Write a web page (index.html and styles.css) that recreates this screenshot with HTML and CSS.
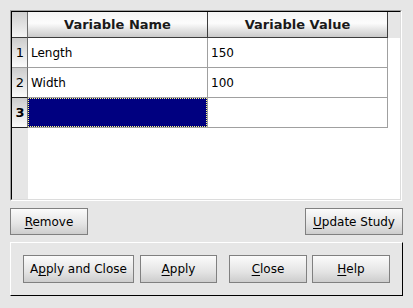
FILE: index.html
```html
<!DOCTYPE html>
<html lang="en">
<head>
  <meta charset="UTF-8">
  <title>Study Variables</title>
  <link rel="stylesheet" href="styles.css">
</head>
<body>
  <div class="dialog">
    <div class="frame">
      <div class="frame-inner">
        <div class="grid">
          <div class="corner"></div>
          <div class="col-head">Variable Name</div>
          <div class="col-head">Variable Value</div>
          <div class="col-rest"></div>

          <div class="row-head">1</div>
          <div class="cell">Length</div>
          <div class="cell">150</div>
          <div class="cell-rest"></div>

          <div class="row-head">2</div>
          <div class="cell">Width</div>
          <div class="cell">100</div>
          <div class="cell-rest"></div>

          <div class="row-head current">3</div>
          <div class="cell selected"><span class="focus"></span></div>
          <div class="cell"></div>
          <div class="cell-rest"></div>
        </div>
        <div class="filler">
          <div class="filler-head"></div>
          <div class="filler-body"></div>
        </div>
      </div>
    </div>

    <div class="action-row">
      <button class="btn btn-remove"><u>R</u>emove</button>
      <button class="btn btn-update"><u>U</u>pdate Study</button>
    </div>

    <div class="group">
      <button class="btn btn-apply-close">A<u>p</u>ply and Close</button>
      <button class="btn btn-apply"><u>A</u>pply</button>
      <button class="btn btn-close"><u>C</u>lose</button>
      <button class="btn btn-help"><u>H</u>elp</button>
    </div>
  </div>
</body>
</html>
```

FILE: styles.css
```css
/* Global */
body {
  margin: 0;
  background-color: #e6e6e6;
  font-family: 'DejaVu Sans', sans-serif;
  font-size: 12px;
  color: #000;
}

.dialog {
  width: 413px;
  height: 308px;
  padding: 10px 0 0 10px;
  box-sizing: border-box;
}

/* Table frame (sunken) */
.frame {
  width: 392px;
  height: 191px;
  box-sizing: border-box;
  border: 1px solid;
  border-color: #a0a0a0 #ffffff #ffffff #a0a0a0;
}

.frame-inner {
  height: 100%;
  box-sizing: border-box;
  border: 1px solid;
  border-color: #000000 #dcdcdc #dcdcdc #000000;
  display: flex;
  flex-direction: column;
  background: #ffffff;
}

.grid {
  display: grid;
  grid-template-columns: 16px 180px 180px 1fr;
  grid-template-rows: 26px 30px 30px 30px;
}

/* Headers */
.corner,
.col-head,
.col-rest {
  box-sizing: border-box;
  border-bottom: 1px solid #3c3c3c;
}

.corner {
  border-right: 1px solid #6e6e6e;
  background: linear-gradient(#cfcfcf, #f4f4f4);
}

.col-head {
  border-right: 1px solid #3c3c3c;
  background: linear-gradient(#f4f4f4, #fcfcfc 45%, #cacaca);
  font-size: 13px;
  font-weight: bold;
  color: #1a1a1a;
  display: flex;
  align-items: center;
  justify-content: center;
  padding-bottom: 1px;
}

.col-rest {
  background: #e6e6e6;
  border-bottom: none;
}

.row-head {
  box-sizing: border-box;
  border-right: 1px solid #6e6e6e;
  border-bottom: 1px solid #9a9a9a;
  background: linear-gradient(#cdcdcd, #fafafa);
  font-size: 13px;
  display: flex;
  align-items: center;
  justify-content: center;
  padding-left: 1px;
}

.row-head.current {
  border-top: 1px solid #222;
  margin-top: -1px;
  border-bottom: 1px solid #222;
  font-weight: bold;
}

/* Cells */
.cell {
  box-sizing: border-box;
  border-right: 1px solid #a0a0a0;
  border-bottom: 1px solid #a0a0a0;
  padding-left: 3px;
  display: flex;
  align-items: center;
}

.cell.selected {
  background-color: #000080;
  padding: 0;
  position: relative;
}

.focus {
  position: absolute;
  inset: 0 0 0 0;
  border: 1px dotted #ffff80;
}

.cell-rest {
  background: #ffffff;
}

/* Empty area below rows */
.filler {
  flex: 1;
  display: flex;
}

.filler-head {
  width: 16px;
  background: #e6e6e6;
}

.filler-body {
  flex: 1;
  background: #ffffff;
}

/* Buttons */
.btn {
  font-family: 'DejaVu Sans', sans-serif;
  font-size: 12px;
  color: #000;
  height: 27px;
  box-sizing: border-box;
  border: 1px solid #808080;
  border-radius: 0;
  background: linear-gradient(#fbfbfb, #e4e4e4 60%, #cdcdcd);
  padding: 0;
  margin: 0;
}

.btn u {
  text-decoration-thickness: 1px;
  text-underline-offset: 2px;
}

.action-row {
  display: flex;
  justify-content: space-between;
  width: 393px;
  margin-top: 7px;
}

.btn-remove { width: 78px; }
.btn-update { width: 98px; }

/* Bottom button group (raised) */
.group {
  width: 393px;
  height: 54px;
  margin-top: 7px;
  box-sizing: border-box;
  border: 1px solid;
  border-color: #ffffff #000000 #000000 #ffffff;
  display: flex;
  align-items: center;
  padding-left: 12px;
}

.group .btn { height: 28px; }

.btn-apply-close { width: 111px; }
.btn-apply { width: 77px; margin-left: 6px; }
.btn-close { width: 78px; margin-left: 12px; }
.btn-help { width: 78px; margin-left: 5px; }
```
